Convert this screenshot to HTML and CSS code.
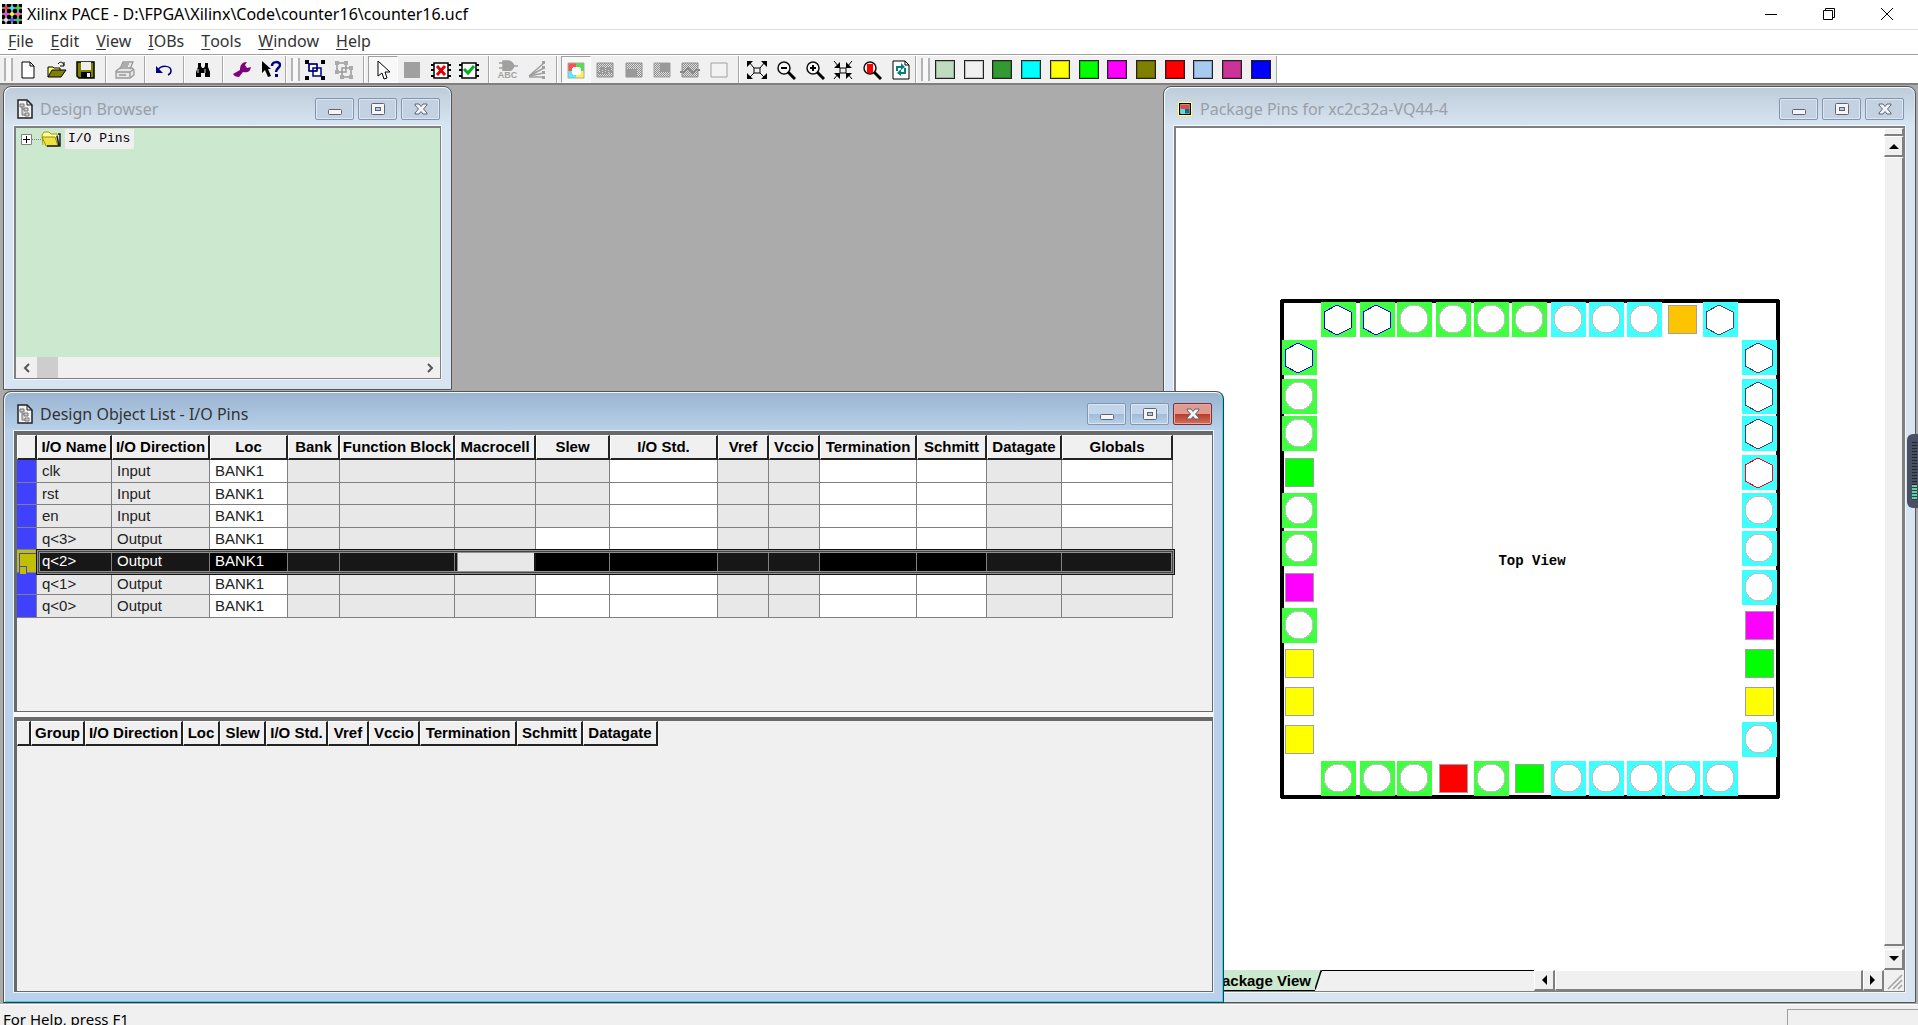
FILE: index.html
```html
<!DOCTYPE html>
<html lang="en">
<head>
<meta charset="utf-8">
<title>Xilinx PACE</title>
<link rel="stylesheet" href="styles.css">
</head>
<body>
<svg class="defs" aria-hidden="true">
  <defs>
    <pattern id="dither" width="2" height="2" patternUnits="userSpaceOnUse"><rect width="2" height="2" fill="#dcdcdc"/><path d="M0 0h1v1H0zM1 1h1v1H1z" fill="#909090"/></pattern>
    <symbol id="doc" viewBox="0 0 16 20"><path d="M1 1h9l5 5v13H1z" fill="#f2f2f2" stroke="#222" stroke-width="1.5"/><path d="M10 1v5h5" fill="none" stroke="#222"/><path d="M3 5h4v3H3zM7 9h4v3H7zM8 14h4v3H8zM5 8v8h3M5 10h2" fill="#ccc" stroke="#777"/></symbol>
    <symbol id="win-min" viewBox="0 0 16 14"><rect x="1.500" y="7.500" width="13" height="5" rx="1" fill="#f5f5f5" stroke="#5b6478"/></symbol>
    <symbol id="win-max" viewBox="0 0 16 14"><rect x="1.500" y="1.500" width="13" height="11" rx="1" fill="#f5f5f5" stroke="#5b6478"/><rect x="5.500" y="5.500" width="5" height="3" fill="#b8cadf" stroke="#5b6478"/></symbol>
    <symbol id="win-close" viewBox="0 0 16 14"><path d="M2 2h4l2 2.500L10 2h4v1L10.500 7l3.500 4v1h-4L8 9.500 6 12H2v-1L5.500 7 2 3z" fill="#f5f5f5" stroke="#5b6478"/></symbol>
    <g id="pin-circle"><rect width="35" height="35"/><circle cx="17" cy="17" r="14" fill="#fff" stroke="#c0c0c0"/></g>
    <g id="pin-hex"><rect width="35" height="35"/><path d="M16 3L30 10V26L16 33L3 26V10z" fill="#fff" stroke="currentColor"/></g>
    <g id="pin-square"><rect x="3.500" y="3.500" width="28" height="28" stroke="#a0a0a0"/></g>
    <symbol id="lens" viewBox="0 0 20 20"><circle cx="8" cy="8" r="6" fill="#f8f8f8" stroke="#111" stroke-width="1.500"/><path d="M12 12l7 7" stroke="#000" stroke-width="3"/></symbol>
  </defs>
</svg>

<header class="titlebar">
  <svg class="app-icon" viewBox="0 0 20 20"><rect width="20" height="20" fill="#000"/><path d="M0 4h20M0 10h20M0 16h20M4 0v20M10 0v20M16 0v20" stroke="#8a8a8a" stroke-width="2"/><g><circle cx="4" cy="4" r="2" fill="#f33"/><circle cx="10" cy="4" r="2" fill="#3ee"/><circle cx="16" cy="4" r="2" fill="#3d3"/><circle cx="4" cy="10" r="2" fill="#e4e"/><circle cx="10" cy="10" r="2" fill="#fe3"/><circle cx="16" cy="10" r="2" fill="#f6a"/><circle cx="4" cy="16" r="2" fill="#ddd"/><circle cx="10" cy="16" r="2" fill="#36f"/><circle cx="16" cy="16" r="2" fill="#3c6"/></g></svg>
  <h1>Xilinx PACE - D:\FPGA\Xilinx\Code\counter16\counter16.ucf</h1>
  <div class="app-controls">
    <button aria-label="Minimize"><svg viewBox="0 0 14 14"><path d="M1 7.500h12"/></svg></button>
    <button aria-label="Restore"><svg viewBox="0 0 14 14"><path d="M1.500 3.500h9v9h-9zM3.500 3.500v-2h9v9h-2"/></svg></button>
    <button aria-label="Close"><svg viewBox="0 0 14 14"><path d="M1 1l12 12M13 1L1 13"/></svg></button>
  </div>
</header>

<nav class="menubar">
  <button><u>F</u>ile</button><button><u>E</u>dit</button><button><u>V</u>iew</button><button><u>I</u>OBs</button><button><u>T</u>ools</button><button><u>W</u>indow</button><button><u>H</u>elp</button>
</nav>

<div class="toolbar">
  <div class="bar">
    <span class="grip"></span>
    <div class="group three">
      <button aria-label="New"><svg viewBox="0 0 20 20"><path d="M4 2h8l4 4v12H4z" fill="#fff" stroke="#000"/><path d="M12 2v4h4" fill="none" stroke="#000"/></svg></button>
      <button aria-label="Open"><svg viewBox="0 0 20 20"><path d="M1 17V7h5l1 1h6v2" fill="#ffff60" stroke="#000"/><path d="M1 17l4-7h14l-5 7z" fill="#808000" stroke="#000"/><path d="M11 4c2-3 5-2 6 1M17 2v4h-4" fill="none" stroke="#000"/></svg></button>
      <button aria-label="Save"><svg viewBox="0 0 20 20"><path d="M1 2h17v16H3l-2-2z" fill="#808000" stroke="#000" stroke-width="1.500"/><path d="M5 2h10v8H5z" fill="#eee"/><path d="M5 12h10v6H5z" fill="#000"/><path d="M11 13h3v4h-3z" fill="#eee"/></svg></button>
    </div>
    <span class="sep"></span>
    <div class="group one"><button aria-label="Print"><svg viewBox="0 0 20 20"><path d="M5 9L8 2h10l-3 7M1 11l4-3h12l2 2v5l-4 3H1zM1 12h14v5M15 12l4-3M8 4h6M7 6h6M4 15h7" fill="#e6e6e6" stroke="#999" stroke-width="1.300"/></svg></button></div>
    <span class="sep"></span>
    <div class="group one"><button aria-label="Undo"><svg viewBox="0 0 20 20"><path d="M4 10c3-5 13-5 13 1 0 2-1 3-3 4" fill="none" stroke="#000080" stroke-width="1.500"/><path d="M2 6v7h7z" fill="#000080"/></svg></button></div>
    <span class="sep"></span>
    <div class="group one"><button aria-label="Find"><svg viewBox="0 0 20 20"><path d="M5 3h3v3l1 2h2l1-2V3h3v4l2 5v5h-5v-4H8v4H3v-5l2-5z"/><path d="M5 9v4M12 9v4" stroke="#ddd"/></svg></button></div>
    <span class="sep"></span>
    <div class="group two">
      <button aria-label="Options"><svg viewBox="0 0 20 20"><path d="M1 14l7-4c0-5 2-8 7-8l-2 3 2 3 4-1c-1 5-4 6-8 5l-4 5c-3 0-5-1-6-3z" fill="#800080"/></svg></button>
      <button aria-label="Context help"><svg viewBox="0 0 20 20"><path d="M1 1l9 8H7l3 7-3 1-3-7-3 3z"/><path d="M11 6c0-5 8-5 8-1 0 3-4 3-4 7" fill="none" stroke="#000080" stroke-width="2.500"/><path d="M14 14h3v3h-3z" fill="#000080"/></svg></button>
    </div>
    <span class="sep end"></span>
  </div>
  <div class="bar">
    <span class="grip"></span>
    <div class="group two">
      <button aria-label="Group"><svg viewBox="0 0 20 20"><path d="M4 4h8v7H4zM8 8h8v8H8z" fill="#fff" stroke="#000080" stroke-width="1.500"/><path d="M4 4h8v7H4z" fill="none" stroke="#000080"/><path d="M0 0h4v4H0zM16 0h4v4h-4zM0 16h4v4H0zM16 16h4v4h-4z"/></svg></button>
      <button aria-label="Ungroup"><svg viewBox="0 0 20 20"><path d="M3 3h9v9H3zM8 8h9v9H8z" fill="none" stroke="#999" stroke-width="1.500"/><path d="M1 1h4v4H1zM10 1h4v4h-4zM1 10h4v4H1zM15 6h4v4h-4zM6 15h4v4H6zM15 15h4v4h-4z" fill="#aaa"/></svg></button>
    </div>
    <span class="sep"></span>
    <div class="group four">
      <button class="pressed" aria-label="Select"><svg viewBox="0 0 20 20"><path d="M5 1v15l4-3 2 6 3-1-2-6h5z" fill="#fff" stroke="#000"/></svg></button>
      <button aria-label="Area"><svg viewBox="0 0 20 20"><path d="M2 2h16v16H2z" fill="#a0a0a0"/></svg></button>
      <button aria-label="Prohibit"><svg viewBox="0 0 20 20"><path d="M3 3h14v15H3z" fill="#fff" stroke="#000" stroke-width="1.500"/><path d="M0 5h3M0 10h3M0 16h3M17 5h3M17 10h3M17 16h3" stroke="#000" stroke-width="2"/><path d="M6 6l8 9M14 6l-8 9" stroke="#e00000" stroke-width="3"/></svg></button>
      <button aria-label="Check"><svg viewBox="0 0 20 20"><path d="M3 3h14v15H3z" fill="#fff" stroke="#000" stroke-width="1.500"/><path d="M0 5h3M0 10h3M0 16h3M17 5h3M17 10h3M17 16h3" stroke="#000" stroke-width="2"/><path d="M5 9l4 4 6-7" fill="none" stroke="#00b020" stroke-width="3"/></svg></button>
    </div>
    <span class="sep"></span>
    <div class="group two">
      <button class="abc" aria-label="Net names"><svg viewBox="0 0 20 11"><path d="M5 1h5c4 0 5 3 6 5-1 2-2 5-6 5H5zM1 3h4M1 8h4M15 6h5" fill="#a0a0a0" stroke="#a0a0a0" stroke-width="1.500"/></svg><span>ABC</span></button>
      <button aria-label="Rats nest"><svg viewBox="0 0 20 20"><path d="M2 16L17 3M2 16l15-8M2 16l15-3M2 17h15" fill="none" stroke="#a0a0a0" stroke-width="1.500"/><path d="M15 1h3v3h-3zM15 6h3v3h-3zM15 11h3v3h-3zM15 16h3v3h-3z" fill="#a0a0a0"/></svg></button>
    </div>
    <span class="sep"></span>
    <div class="group six">
      <button class="pressed" aria-label="Show banks"><svg viewBox="0 0 20 20"><path d="M2 3h8v8H2z" fill="#ff5050"/><path d="M10 3h8v8h-8z" fill="#50e050"/><path d="M2 11h8v7H2z" fill="#50f0ff"/><path d="M10 11h8v7h-8z" fill="#fff050"/><path d="M2 3h16v15H2z" fill="none" stroke="#aaa"/><path d="M7 7h7v1h1v6h-1v1H7v-1H6V8h1z" fill="#fff"/></svg></button>
      <button aria-label="Show slew"><svg viewBox="0 0 20 20"><path d="M2 3h16v14H2z" fill="url(#dither)" stroke="#909090"/><path d="M3 13h3V8h3v5h3V8h3v4h3" fill="none" stroke="#999" stroke-width="2"/></svg></button>
      <button aria-label="Show region"><svg viewBox="0 0 20 20"><path d="M2 3h16v14H2z" fill="url(#dither)" stroke="#909090"/><path d="M2 9h11v8H2z" fill="#999"/></svg></button>
      <button aria-label="Show blocks"><svg viewBox="0 0 20 20"><path d="M2 3h16v14H2z" fill="url(#dither)" stroke="#a0a0a0"/><path d="M8 3h10v9H8z" fill="#999"/></svg></button>
      <button aria-label="Show noise"><svg viewBox="0 0 20 20"><path d="M2 3h16v14H2z" fill="url(#dither)" stroke="#909090"/><path d="M0 12h4l4-4 5 5 3-3h4" fill="none" stroke="#888" stroke-width="2"/></svg></button>
      <button aria-label="Show none"><svg viewBox="0 0 20 20"><path d="M2 3h16v14H2z" fill="#f2f2f2" stroke="#a0a0a0"/></svg></button>
    </div>
    <span class="sep"></span>
    <div class="group six">
      <button aria-label="Zoom full"><svg viewBox="0 0 20 20"><path d="M7 8h6v5H7zM2 2l5 6M18 2l-5 6M2 18l5-5M18 18l-5-5" fill="none" stroke="#000"/><path d="M0 1h6L0 7zM20 1v6l-6-6zM0 19v-6l6 6zM20 19h-6l6-6z"/></svg></button>
      <button aria-label="Zoom out"><svg viewBox="0 0 20 20"><use href="#lens"/><path d="M5 8h6" stroke="#000" stroke-width="2"/></svg></button>
      <button aria-label="Zoom in"><svg viewBox="0 0 20 20"><use href="#lens"/><path d="M5 8h6M8 5v6" stroke="#000" stroke-width="2"/></svg></button>
      <button aria-label="Zoom to fit"><svg viewBox="0 0 20 20"><path d="M7 8h6v5H7zM1 1l5 6M19 1l-5 6M1 19l5-6M19 19l-5-6" fill="none" stroke="#000"/><path d="M7 2v6H1zM13 2l6 6h-6zM7 19v-6H1zM13 19l6-6h-6z"/></svg></button>
      <button aria-label="Zoom selected"><svg viewBox="0 0 20 20"><use href="#lens"/><path d="M5 4h6v9H5z" fill="#f00"/></svg></button>
      <button aria-label="Refresh"><svg viewBox="0 0 20 20"><path d="M2 1h12l4 4v14H2z" fill="#fff" stroke="#000"/><path d="M14 1v4h4" fill="none" stroke="#000"/><path d="M6 11V7h5M14 8v5H9" fill="none" stroke="#008080" stroke-width="2"/><path d="M10 3l4 4-4 3zM10 9v7l-4-3z" fill="#008080"/></svg></button>
    </div>
    <span class="sep end"></span>
  </div>
  <div class="bar">
    <span class="grip"></span>
    <div class="group twelve">
      <button class="swatch c1" aria-label="Pale green"></button><button class="swatch c2" aria-label="Light gray"></button><button class="swatch c3" aria-label="Green"></button><button class="swatch c4" aria-label="Cyan"></button><button class="swatch c5" aria-label="Yellow"></button><button class="swatch c6" aria-label="Lime"></button><button class="swatch c7" aria-label="Magenta"></button><button class="swatch c8" aria-label="Olive"></button><button class="swatch c9" aria-label="Red"></button><button class="swatch c10" aria-label="Light blue"></button><button class="swatch c11" aria-label="Plum"></button><button class="swatch c12" aria-label="Blue"></button>
    </div>
    <span class="sep end"></span>
  </div>
</div>

<main class="workspace">
  <section class="window browser">
    <header class="caption">
      <svg class="doc-icon"><use href="#doc"/></svg><h2>Design Browser</h2>
      <button aria-label="Minimize"><svg><use href="#win-min"/></svg></button><button aria-label="Maximize"><svg><use href="#win-max"/></svg></button><button aria-label="Close"><svg><use href="#win-close"/></svg></button>
    </header>
    <div class="client">
      <ul class="tree">
        <li><button class="expander" aria-label="Expand"><svg viewBox="0 0 11 11"><path d="M.5.5h10v10H.5z" fill="#fff" stroke="#808080"/><path d="M2 5.500h7M5.500 2v7" stroke="#000"/></svg></button><span class="branch"></span><svg class="folder" viewBox="0 0 20 16"><path d="M2 14L1 4l2-3h5l2 2h6v3" fill="#ffffa0" stroke="#a0a000"/><path d="M1 6h13l3 9H5z" fill="#eee040" stroke="#909000"/><path d="M17 3h2v12H6M16 5l2 10" fill="none" stroke="#222" stroke-width="1.500"/></svg><span class="node">I/O Pins</span></li>
      </ul>
      <div class="hscroll flat">
        <button aria-label="Scroll left"><svg viewBox="0 0 10 10"><path d="M7 1L3 5l4 4"/></svg></button><span class="thumb"></span><button aria-label="Scroll right"><svg viewBox="0 0 10 10"><path d="M3 1l4 4-4 4"/></svg></button>
      </div>
    </div>
  </section>

  <section class="window package">
    <header class="caption">
      <svg class="pkg-icon" viewBox="0 0 18 18"><path d="M1 1h16v16H1z" fill="#fff" stroke="#e8e800" stroke-dasharray="2 1"/><path d="M3 3h12v12H3z" fill="#fff" stroke="#000" stroke-width="1.500"/><path d="M4 4h10v5H4z" fill="#e04848"/><path d="M4 9h5v5H4z" fill="#50e0e0"/><path d="M9 9h5v5H9z" fill="#107080"/></svg><h2>Package Pins for xc2c32a-VQ44-4</h2>
      <button aria-label="Minimize"><svg><use href="#win-min"/></svg></button><button aria-label="Maximize"><svg><use href="#win-max"/></svg></button><button aria-label="Close"><svg><use href="#win-close"/></svg></button>
    </header>
    <div class="client">
      <div class="viewport">
        <svg class="chip" viewBox="0 0 500 500" width="500" height="500">
          <rect class="outline" x="2" y="2" width="496" height="496" rx="1"/>
          <g class="green blue-line">
            <use href="#pin-hex" x="41" y="3"/><use href="#pin-hex" x="80" y="3"/><use href="#pin-hex" x="2" y="41"/>
          </g>
          <g class="green">
            <use href="#pin-circle" x="117" y="3"/><use href="#pin-circle" x="156" y="3"/><use href="#pin-circle" x="194" y="3"/><use href="#pin-circle" x="232" y="3"/>
            <use href="#pin-circle" x="2" y="80"/><use href="#pin-circle" x="2" y="117"/><use href="#pin-circle" x="2" y="194"/><use href="#pin-circle" x="2" y="232"/><use href="#pin-circle" x="2" y="309"/>
            <use href="#pin-circle" x="41" y="462"/><use href="#pin-circle" x="80" y="462"/><use href="#pin-circle" x="117" y="462"/><use href="#pin-circle" x="194" y="462"/>
          </g>
          <g class="cyan">
            <use href="#pin-circle" x="271" y="3"/><use href="#pin-circle" x="309" y="3"/><use href="#pin-circle" x="347" y="3"/>
            <use href="#pin-circle" x="462" y="194"/><use href="#pin-circle" x="462" y="232"/><use href="#pin-circle" x="462" y="271"/><use href="#pin-circle" x="462" y="423"/>
            <use href="#pin-circle" x="271" y="462"/><use href="#pin-circle" x="309" y="462"/><use href="#pin-circle" x="347" y="462"/><use href="#pin-circle" x="385" y="462"/><use href="#pin-circle" x="423" y="462"/>
          </g>
          <g class="cyan dark-line">
            <use href="#pin-hex" x="423" y="3"/><use href="#pin-hex" x="462" y="41"/><use href="#pin-hex" x="462" y="80"/><use href="#pin-hex" x="462" y="117"/>
          </g>
          <g class="cyan red-line"><use href="#pin-hex" x="462" y="156"/></g>
          <g class="orange"><use href="#pin-square" x="385" y="3"/></g>
          <g class="lime"><use href="#pin-square" x="2" y="156"/><use href="#pin-square" x="462" y="347"/><use href="#pin-square" x="232" y="462"/></g>
          <g class="magenta"><use href="#pin-square" x="2" y="271"/><use href="#pin-square" x="462" y="309"/></g>
          <g class="yellow"><use href="#pin-square" x="2" y="347"/><use href="#pin-square" x="2" y="385"/><use href="#pin-square" x="2" y="423"/><use href="#pin-square" x="462" y="385"/></g>
          <g class="red"><use href="#pin-square" x="156" y="462"/></g>
          <text x="252" y="266">Top View</text>
        </svg>
      </div>
      <div class="vscroll">
        <span class="splitbox"></span>
        <button aria-label="Scroll up"><svg viewBox="0 0 10 6"><path d="M0 6l5-5 5 5z"/></svg></button>
        <span class="thumb"></span>
        <button aria-label="Scroll down"><svg viewBox="0 0 10 6"><path d="M0 0h10L5 5z"/></svg></button>
      </div>
      <div class="sheet-bar">
        <button class="sheet-tab">Package View</button>
        <svg class="tab-edge" viewBox="0 0 7 20"><path d="M0 0h6L0 20z" fill="#cce8cf"/><path d="M0 19.500L6 1h1" fill="none" stroke="#000" stroke-width="1.500"/></svg>
        <span class="sheet-line"></span>
        <div class="hscroll raised">
          <button aria-label="Scroll left"><svg viewBox="0 0 6 10"><path d="M6 0v10L1 5z"/></svg></button><span class="thumb"></span><button aria-label="Scroll right"><svg viewBox="0 0 6 10"><path d="M0 0l5 5-5 5z"/></svg></button>
        </div>
      </div>
      <svg class="size-grip" viewBox="0 0 20 20"><path d="M4 19L18 5M9 19l9-9M14 19l4-4" stroke="#a0a0a0" stroke-width="1.500"/></svg>
    </div>
  </section>

  <section class="window objects active">
    <header class="caption">
      <svg class="doc-icon"><use href="#doc"/></svg><h2>Design Object List - I/O Pins</h2>
      <button aria-label="Minimize"><svg><use href="#win-min"/></svg></button><button aria-label="Maximize"><svg><use href="#win-max"/></svg></button><button class="close" aria-label="Close"><svg><use href="#win-close"/></svg></button>
    </header>
    <div class="panes">
      <div class="pane upper">
        <table class="grid pins">
          <colgroup><col class="w20"><col class="w75"><col class="w98"><col class="w78"><col class="w52"><col class="w115"><col class="w81"><col class="w74"><col class="w108"><col class="w51"><col class="w51"><col class="w97"><col class="w70"><col class="w75"><col class="w111"></colgroup>
          <thead><tr><th></th><th>I/O Name</th><th>I/O Direction</th><th>Loc</th><th>Bank</th><th>Function Block</th><th>Macrocell</th><th>Slew</th><th>I/O Std.</th><th>Vref</th><th>Vccio</th><th>Termination</th><th>Schmitt</th><th>Datagate</th><th>Globals</th></tr></thead>
          <tbody>
            <tr><td class="mark"></td><td>clk</td><td>Input</td><td class="edit">BANK1</td><td></td><td></td><td></td><td></td><td class="edit"></td><td></td><td></td><td class="edit"></td><td class="edit"></td><td></td><td class="edit"></td></tr>
            <tr><td class="mark"></td><td>rst</td><td>Input</td><td class="edit">BANK1</td><td></td><td></td><td></td><td></td><td class="edit"></td><td></td><td></td><td class="edit"></td><td class="edit"></td><td></td><td class="edit"></td></tr>
            <tr><td class="mark"></td><td>en</td><td>Input</td><td class="edit">BANK1</td><td></td><td></td><td></td><td></td><td class="edit"></td><td></td><td></td><td class="edit"></td><td class="edit"></td><td></td><td class="edit"></td></tr>
            <tr><td class="mark"></td><td>q&lt;3&gt;</td><td>Output</td><td class="edit">BANK1</td><td></td><td></td><td></td><td class="edit"></td><td class="edit"></td><td></td><td></td><td class="edit"></td><td class="edit"></td><td></td><td></td></tr>
            <tr class="selected"><td class="mark"></td><td>q&lt;2&gt;</td><td>Output</td><td class="edit">BANK1</td><td></td><td></td><td class="current"></td><td class="edit"></td><td class="edit"></td><td></td><td></td><td class="edit"></td><td class="edit"></td><td></td><td></td></tr>
            <tr><td class="mark"></td><td>q&lt;1&gt;</td><td>Output</td><td class="edit">BANK1</td><td></td><td></td><td></td><td class="edit"></td><td class="edit"></td><td></td><td></td><td class="edit"></td><td class="edit"></td><td></td><td></td></tr>
            <tr><td class="mark"></td><td>q&lt;0&gt;</td><td>Output</td><td class="edit">BANK1</td><td></td><td></td><td></td><td class="edit"></td><td class="edit"></td><td></td><td></td><td class="edit"></td><td class="edit"></td><td></td><td></td></tr>
          </tbody>
        </table>
      </div>
      <div class="pane lower">
        <table class="grid groups">
          <colgroup><col class="w14"><col class="w54"><col class="w98"><col class="w37"><col class="w46"><col class="w62"><col class="w41"><col class="w51"><col class="w97"><col class="w66"><col class="w75"></colgroup>
          <thead><tr><th></th><th>Group</th><th>I/O Direction</th><th>Loc</th><th>Slew</th><th>I/O Std.</th><th>Vref</th><th>Vccio</th><th>Termination</th><th>Schmitt</th><th>Datagate</th></tr></thead>
        </table>
      </div>
    </div>
  </section>

  <div class="edge-meter" aria-hidden="true"></div>
</main>

<footer class="statusbar"><span>For Help, press F1</span><span class="cell"></span></footer>
</body>
</html>
```

FILE: styles.css
```css
* { box-sizing: border-box; }
html, body { height: 100%; margin: 0; }
body {
  display: flex;
  flex-direction: column;
  overflow: hidden;
  background: #f0f0f0;
  color: #000;
  font: 16px/20px "Noto Sans", "Open Sans", sans-serif;
}
h1, h2, ul { margin: 0; padding: 0; font-weight: 400; }
button { display: flex; align-items: center; justify-content: center; margin: 0; padding: 0; border: 0; background: none; color: inherit; font: inherit; }
svg { display: block; flex: none; }
.defs { position: absolute; width: 0; height: 0; }

/* Application title bar and menu */
.titlebar { display: flex; align-items: center; height: 30px; flex: none; padding: 0 2px 2px; background: #fff; border-bottom: 1px solid #e0e0e0; }
.app-icon { width: 20px; height: 20px; }
.titlebar h1 { flex: 1; padding-left: 5px; font-size: 16px; }
.app-controls { display: flex; }
.app-controls button { width: 58px; height: 27px; }
.app-controls svg { width: 14px; height: 14px; fill: none; stroke: #000; }
.menubar { display: flex; gap: 17px; height: 24px; flex: none; padding: 0 0 2px 8px; background: #fff; color: #333; }
.menubar u { text-underline-offset: 2px; }

/* Toolbars */
.toolbar { display: flex; height: 29px; flex: none; background: #fff; border-top: 1px solid #a0a0a0; }
.bar { display: flex; align-items: stretch; background: #f0f0f0; border-top: 1px solid #fff; }
.grip { width: 9px; margin: 2px 0 2px 4px; border: solid #b4b4b4; border-width: 0 2px; background: #f8f8f8; }
.sep { width: 2px; margin: 0 3px 0 5px; background: #a8a8a8; border-right: 1px solid #fff; }
.sep.end { margin: 0; }
.group { display: flex; align-items: center; }
.group button { flex: 1; height: 27px; }
.group svg { width: 20px; height: 20px; }
.one { width: 29px; }
.two { width: 58px; }
.three { width: 87px; }
.four { width: 115px; }
.six { width: 172px; }
.twelve { width: 346px; justify-content: space-between; padding: 0 5px; }
.group .pressed { background: #f8f8f8; border: 1px solid #a0a0a0; border-right-color: #fff; border-bottom-color: #fff; }
.group .abc { flex-direction: column; color: #a0a0a0; font: bold 9px/8px "Liberation Sans", sans-serif; }
.group .abc svg { height: 11px; }
.group .swatch { flex: none; width: 20px; height: 19px; border: 1px solid #222; box-shadow: inset 0 0 0 1px #0003; }
.c1 { background: #c0dcc0; } .c2 { background: #f0f0f0; } .c3 { background: #339933; } .c4 { background: #00ffff; }
.c5 { background: #ffff00; } .c6 { background: #00ff00; } .c7 { background: #ff00ff; } .c8 { background: #808000; }
.c9 { background: #ff0000; } .c10 { background: #a6caf0; } .c11 { background: #cc3399; } .c12 { background: #0000ff; }

/* Workspace holding the free-floating windows */
.workspace { position: relative; flex: 1; min-height: 0; overflow: hidden; background: #ababab; border-top: 2px solid #808080; }
.window { position: absolute; display: flex; flex-direction: column; padding: 0 10px 10px; border: 1px solid #555; border-radius: 8px 8px 0 0; background: #d7e4f2; box-shadow: inset 1px 1px #f4f8fc; }
.browser { left: 3px; top: 1px; width: 449px; height: 304px; }
.package { left: 1163px; right: 2px; top: 1px; bottom: 1px; }
.objects { left: 3px; top: 306px; bottom: 1px; width: 1221px; }
.window.active { background: #b9d1ea; border-right-color: #12475a; border-bottom-color: #12475a; box-shadow: inset 1px 1px #f4f8fc, inset -1px -1px #48cde0; }
.caption { display: flex; align-items: center; height: 38px; flex: none; gap: 4px; margin: 1px -9px 0; padding: 4px 10px 0 12px; border-radius: 7px 7px 0 0; background: linear-gradient(#bfccda, #d7e4f2); }
.active .caption { background: linear-gradient(#99b4d1, #b9d1ea); }
.caption h2 { flex: 1; padding-left: 3px; color: #9a9fa6; font-size: 16px; white-space: nowrap; }
.active .caption h2 { color: #333; }
.doc-icon { width: 16px; height: 20px; }
.pkg-icon { width: 16px; height: 16px; }
.caption button { width: 39px; height: 22px; border: 1px solid #8296b4; border-radius: 2px; box-shadow: inset 0 0 0 1px #dbe6f1; background: #c3d1e1; }
.active .caption button { background: linear-gradient(#c2d5ea 50%, #9fbbd8 50%, #b9d1ea); }
.active .caption .close { border-color: #7a3038; box-shadow: inset 0 0 0 1px #e8a8a0; background: linear-gradient(#e09a90 50%, #b93c24 50%, #d0705c); }
.caption button svg { width: 16px; height: 14px; }
.client { flex: 1; min-height: 0; border: 2px solid #808080; border-right: 1px solid #808080; border-bottom: 1px solid #808080; outline: 1px solid #f4f7fb; outline-offset: 0; background: #fff; }

/* Design browser */
.browser .client { display: flex; flex-direction: column; background: #cce8cf; }
.tree { flex: 1; list-style: none; padding: 1px 0 0 5px; }
.tree li { display: flex; align-items: center; height: 20px; }
.expander, .expander svg { width: 11px; height: 11px; }
.branch { width: 9px; border-top: 1px dotted #808080; }
.folder { width: 20px; height: 16px; }
.node { margin-left: 4px; padding: 0 4px 0 3px; background: #f0f0f0; font: 13px/20px "Liberation Mono", monospace; }
.hscroll { display: flex; height: 21px; background: #f0f0f0; }
.hscroll button { width: 21px; }
.flat svg { width: 10px; height: 10px; fill: none; stroke: #555; stroke-width: 2; }
.flat .thumb { width: 21px; margin-right: auto; background: #cdcdcd; }

/* Package pins */
.package .client { display: grid; grid-template: minmax(0, 1fr) 21px / minmax(0, 1fr) 20px; background: #f0f0f0; }
.viewport { display: flex; align-items: center; justify-content: center; background: #fff; }
.chip { shape-rendering: crispEdges; }
.chip .outline { fill: #fff; stroke: #000; stroke-width: 4; }
.chip text { fill: #000; font: bold 14px "Liberation Mono", monospace; text-anchor: middle; }
.green { fill: #40ff40; } .cyan { fill: #40ffff; } .orange { fill: #ffc400; } .lime { fill: #00ff00; }
.magenta { fill: #ff00ff; } .yellow { fill: #ffff00; } .red { fill: #ff0000; }
.blue-line { color: #0000ff; } .dark-line { color: #504060; } .red-line { color: #ff0020; }
.vscroll { display: flex; flex-direction: column; }
.vscroll .splitbox, .vscroll button, .vscroll .thumb, .raised button, .raised .thumb { border: 1px solid #fff; border-right: 2px solid #808080; border-bottom: 2px solid #808080; background: #f0f0f0; }
.splitbox { height: 8px; }
.vscroll button { height: 21px; }
.vscroll svg { width: 10px; height: 6px; }
.vscroll .thumb { flex: 1; margin-bottom: 3px; }
.sheet-bar { display: flex; min-width: 0; }
.sheet-tab { margin-left: 28px; padding-left: 8px; padding-right: 4px; background: #cce8cf; border-bottom: 1px solid #000; font: bold 15px/19px "Liberation Sans", sans-serif; }
.tab-edge { width: 7px; height: 20px; }
.sheet-line { flex: 1; border-top: 1px solid #000; }
.raised { width: 350px; flex: none; }
.raised .thumb { flex: 1; }
.raised svg { width: 6px; height: 10px; }
.size-grip { width: 20px; height: 20px; }

/* Design object list */
.panes { display: flex; flex: 1; flex-direction: column; gap: 5px; min-height: 0; background: #f8f8f8; outline: 1px solid #eef4fb; }
.pane { border: solid #696969; border-width: 4px 1px 1px 3px; background: #f0f0f0; }
.upper { height: 281px; flex: none; }
.lower { flex: 1; min-height: 0; }
.grid { table-layout: fixed; width: 0; border-collapse: separate; border-spacing: 0; font: 15px/18px "Liberation Sans", Arial, sans-serif; }
.grid th { height: 25px; padding: 0; border: 1px solid #fff; border-right: 2px solid #222; border-bottom: 2px solid #222; background: #f0f0f0; font-weight: 700; white-space: nowrap; }
.grid td { height: 23px; padding: 0 0 0 5px; border: solid #808080; border-width: 0 1px 1px 0; background: #e8e8e8; color: #222; }
.grid tr:nth-child(even) td { height: 22px; }
.grid td.edit { background: #fff; }
.grid td.mark { background: #4040ff; }
.grid .selected { position: relative; }
.grid .selected td { background: #171717; color: #fff; }
.grid .selected td.edit { background: #000; }
.grid .selected td.current { background: #e8e8e8; border-right: 2px solid #171717; box-shadow: inset 2px 0 #171717, inset 3px 0 #909090; }
.grid .selected td.mark { background: #c0c000; box-shadow: inset 2px 3px #c0c000, inset 3px 4px #4040ff; }
.selected::after { content: ""; position: absolute; inset: -1px -2px -2px 19px; box-shadow: inset 0 0 0 1px #111, inset 0 0 0 2px #909090, inset 0 0 0 3px #444, inset 0 0 0 4px #909090; }
.selected .mark::after { content: ""; position: absolute; left: 2px; bottom: -2px; width: 6px; height: 7px; border: 1px solid #4040ff; background: #c0c000; }
.w14 { width: 14px; } .w20 { width: 20px; } .w37 { width: 37px; } .w41 { width: 41px; } .w46 { width: 46px; }
.w51 { width: 51px; } .w52 { width: 52px; } .w54 { width: 54px; } .w62 { width: 62px; } .w66 { width: 66px; }
.w70 { width: 70px; } .w74 { width: 74px; } .w75 { width: 75px; } .w78 { width: 78px; } .w81 { width: 81px; }
.w97 { width: 97px; } .w98 { width: 98px; } .w108 { width: 108px; } .w111 { width: 111px; } .w115 { width: 115px; }

/* Level meter docked on the screen edge */
.edge-meter { position: absolute; right: 0; top: 349px; width: 11px; height: 74px; padding: 8px 1px 8px 5px; border-radius: 6px 0 0 6px; background: repeating-linear-gradient(#22252c 0 1px, #0000 1px 3px) content-box, #4a5064; }
.edge-meter::after { content: ""; display: block; height: 15px; margin-top: 43px; background: repeating-linear-gradient(#60d0a0 0 2px, #2c4048 2px 3px); }

/* Status bar */
.statusbar { display: flex; justify-content: space-between; height: 21px; flex: none; overflow: hidden; padding: 4px 0 0 3px; border-top: 1px solid #fff; background: #f0f0f0; font-size: 15px; }
.statusbar .cell { width: 131px; border: 1px solid #a0a0a0; border-right: 0; border-bottom: 0; }
```
